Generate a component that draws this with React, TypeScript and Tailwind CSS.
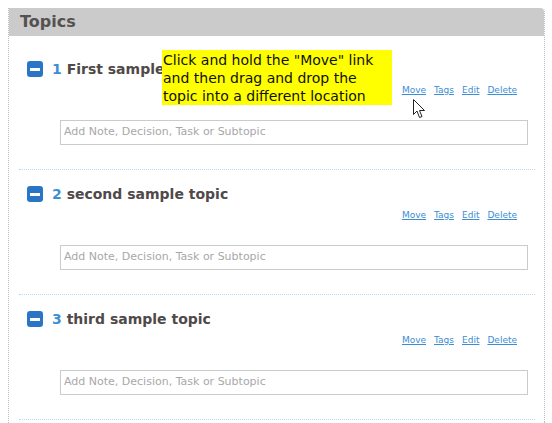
import React from "react";

const topics = [
  { n: 1, title: "First sample" },
  { n: 2, title: "second sample topic" },
  { n: 3, title: "third sample topic" },
];

const CollapseIcon = () => (
  <span className="flex h-[16px] w-[16px] shrink-0 items-center justify-center rounded-[3px] bg-[#2a76c6]">
    <span className="h-[3px] w-[10px] bg-white" />
  </span>
);

const Cursor = () => (
  <svg width="13" height="20" viewBox="0 0 13 20" className="absolute left-[394px] top-[54px]">
    <path d="M0.5 0.5 L0.5 15.5 L4 12 L6.5 18.5 L9 17.5 L6.5 11.5 L11.5 11.5 Z" fill="#fff" stroke="#222" strokeWidth="1" strokeLinejoin="round" />
  </svg>
);

const Topic = ({ n, title, first }: { n: number; title: string; first?: boolean }) => (
  <div className="relative border-b border-dotted border-[#b3dcef] pt-[16px] pb-[24px]">
    <div className="ml-[8px] flex h-[16px] items-center gap-[9px]">
      <CollapseIcon />
      <div className="text-[14px] font-bold leading-none text-[#4f4949]">
        <span className="text-[#3d8fd3]">{n}</span> {title}
      </div>
    </div>
    <div className="mt-[7px] flex h-[13px] justify-end gap-[8px] pr-[18px] text-[9px] leading-[13px] text-[#3a8ed6]">
      <a className="underline">Move</a>
      <a className="underline">Tags</a>
      <a className="underline">Edit</a>
      <a className="underline">Delete</a>
    </div>
    <div className="ml-[41px] mr-[7px] mt-[23px] flex h-[25px] items-center border border-[#c9cccc] px-[3px] text-[11px] text-[#a8a8a8]">
      Add Note, Decision, Task or Subtopic
    </div>
    {first && (
      <>
        <div className="absolute left-[143px] top-[5px] w-[230px] bg-[#ffff00] pl-[1px] pt-[1px] text-[14px] leading-[18px] text-[#111]">
          Click and hold the "Move" link
          <br />
          and then drag and drop the
          <br />
          topic into a different location
        </div>
        <Cursor />
      </>
    )}
  </div>
);

export default function App() {
  return (
    <div className="h-screen w-full overflow-hidden bg-white pl-[8px] pr-[7px] pt-[8px] font-['DejaVu_Sans',Verdana,sans-serif]">
      <div className="h-full rounded-tr-[4px] border-l border-r border-dotted border-[#b9b9c4]">
        <div className="flex h-[28px] items-center rounded-tr-[4px] bg-[#cbcbcb] px-[11px] text-[16px] font-bold text-[#555151]">
          Topics
        </div>
        <div className="pl-[10px] pr-[9px] pt-[9px]">
          {topics.map((t, i) => (
            <Topic key={t.n} n={t.n} title={t.title} first={i === 0} />
          ))}
        </div>
      </div>
    </div>
  );
}
